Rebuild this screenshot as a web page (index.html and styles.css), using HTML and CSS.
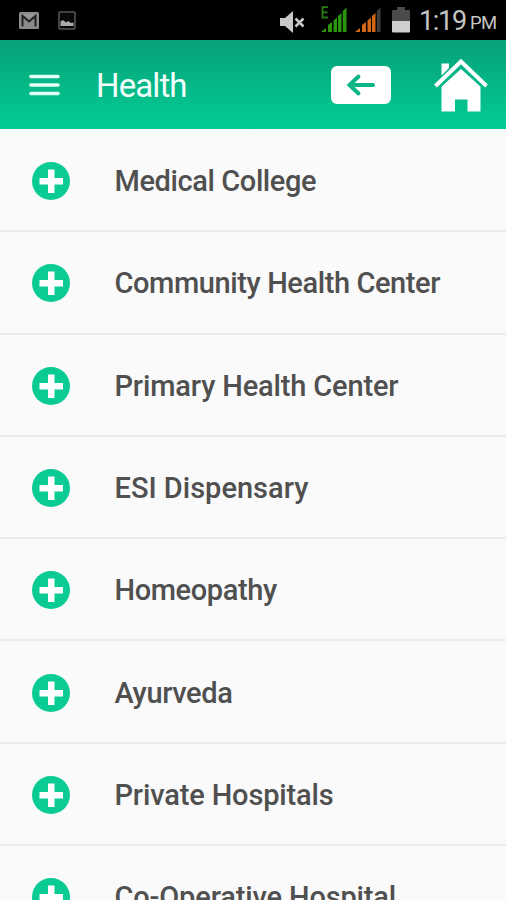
FILE: index.html
```html
<!DOCTYPE html>
<html lang="en">
    <head>
        <meta charset="UTF-8">
        <meta name="viewport" content="width=device-width, initial-scale=1.0">
        <title>Health</title>
        <link rel="stylesheet" href="styles.css">
    </head>

    <body>
        <svg class="symbols">
            <symbol id="plus" viewBox="0 0 38 38">
                <circle cx="19" cy="19" r="19" fill="#0acb94"/>
                <path d="M16 7.5h6.500v8.500h8.500v6.500h-8.500v8.500h-6.500v-8.500h-8.500v-6.500h8.500z" fill="#fff"/>
            </symbol>
        </svg>

        <div class="status">
            <svg class="mail" viewBox="0 0 20 17">
                <rect width="20" height="17" rx="1.500" fill="#8b8b8b"/>
                <path d="M3.500 14.500V4l6.500 5.500L16.500 4v10.500" fill="none" stroke="#222" stroke-width="2"/>
                <path d="M4 2h12l-6 4.500z" fill="#999"/>
            </svg>
            <svg class="photo" viewBox="0 0 18 19">
                <rect x="1" y="1" width="16" height="17" rx="1" fill="#080808" stroke="#555" stroke-width="1.600"/>
                <path d="M2.500 15v-4.500l2.500-1.500 3 2.500 2-1.500 3 2 2.500-.5V15z" fill="#aaa"/>
            </svg>
            <svg class="mute" viewBox="0 0 26 22">
                <path d="M0 7h5l8-7v22l-8-7H0z" fill="#c8c8c8"/>
                <path d="M15.500 7.500l8 8m0-8l-8 8" stroke="#c8c8c8" stroke-width="2.500"/>
            </svg>
            <svg class="signal" viewBox="0 0 28 28">
                <path d="M8 1.200H2.500v10.300H8M2.500 6.300h5" fill="none" stroke="#287c10" stroke-width="1.800"/>
                <path d="M1 26l5-4v4zM8 19l4-3v10H8zM13.500 14.500l3.500-3V26h-3.500zM18 10l3.500-3v19H18zM22.800 5l3.700-3.500V26h-3.700z" fill="#2b950d"/>
            </svg>
            <svg class="signal" viewBox="0 0 28 28">
                <path d="M1 26l5-4v4zM8 19l4-3v10H8zM13.500 14.500l3.500-3V26h-3.500zM18 10l3.500-3v19H18z" fill="#d36718"/>
                <path d="M22.800 5l3.700-3.500V26h-3.700z" fill="#3c3c3c"/>
            </svg>
            <svg class="battery" viewBox="0 0 18 26">
                <path d="M5 0h8v3h4q1 0 1 1v10H0V4q0-1 1-1h4z" fill="#4a4a4a"/>
                <path d="M0 14h18v10.500q0 1-1 1H1q-1 0-1-1z" fill="#cfcfcf"/>
            </svg>
            <span class="time">1:19</span>
            <span class="period">PM</span>
        </div>

        <div class="header">
            <svg class="menu" viewBox="0 0 32 22">
                <path d="M3 2.500h27M3 11h27M3 19.500h27" stroke="#e4fff5" stroke-width="3.600" stroke-linecap="round"/>
            </svg>
            <h1>Health</h1>
            <svg class="back" viewBox="0 0 60 38">
                <rect width="60" height="38" rx="6" fill="#fff"/>
                <path d="M42 19H19M27.500 10.500l-9 8.500 9 8.500" fill="none" stroke="#0cb586" stroke-width="4" stroke-linecap="round"/>
            </svg>
            <svg class="home" viewBox="0 0 54 54">
                <path d="M7.500 4.500H15V9l-7.500 7.500zM7.500 27.500L27 10l19.500 17.500V52.500h-13V40.500H21v12H7.500z" fill="#fff"/>
                <path d="M1.500 27L27 2.500 52.500 27" fill="none" stroke="#fff" stroke-width="4"/>
                <path d="M5.500 28.200L27 7.800l21.500 20.400" fill="none" stroke="#0ab78a" stroke-width="1.800"/>
            </svg>
        </div>

        <ul class="list">
            <li class="tight"><svg class="icon"><use href="#plus"/></svg><span>Medical College</span></li>
            <li class="tight"><svg class="icon"><use href="#plus"/></svg><span>Community Health Center</span></li>
            <li class="snug"><svg class="icon"><use href="#plus"/></svg><span>Primary Health Center</span></li>
            <li><svg class="icon"><use href="#plus"/></svg><span>ESI Dispensary</span></li>
            <li class="tight"><svg class="icon"><use href="#plus"/></svg><span>Homeopathy</span></li>
            <li class="tight"><svg class="icon"><use href="#plus"/></svg><span>Ayurveda</span></li>
            <li class="snug"><svg class="icon"><use href="#plus"/></svg><span>Private Hospitals</span></li>
            <li class="snug"><svg class="icon"><use href="#plus"/></svg><span>Co-Operative Hospital</span></li>
        </ul>
    </body>
</html>
```

FILE: styles.css
```css
* {
    box-sizing: border-box;
}
body {
    margin: 0;
    height: 900px;
    overflow: hidden;
    display: flex;
    flex-direction: column;
    font-family: Roboto, sans-serif;
    background-color: #fafafa;
}
svg {
    display: block;
    flex-shrink: 0;
}
.symbols {
    display: none;
}
.status {
    display: flex;
    align-items: flex-start;
    height: 40px;
    flex-shrink: 0;
    padding-left: 19px;
    background-color: #000;
    color: #c4c4c4;
}
.mail {
    width: 20px;
    height: 17px;
    margin-top: 12px;
}
.photo {
    width: 18px;
    height: 19px;
    margin: 11px 0 0 19px;
}
.mute {
    width: 26px;
    height: 22px;
    margin: 11px 14px 0 204px;
}
.signal {
    width: 28px;
    height: 28px;
    margin: 6px 6px 0 0;
}
.battery {
    width: 18px;
    height: 26px;
    margin: 7px 9px 0 4px;
}
.time {
    font-size: 27px;
    line-height: 42px;
    letter-spacing: -1.3px;
}
.period {
    margin-left: 4px;
    font-size: 18.5px;
    line-height: 47px;
    letter-spacing: -0.5px;
}
.header {
    display: flex;
    align-items: center;
    height: 89px;
    flex-shrink: 0;
    padding-left: 28px;
    background: linear-gradient(#08a179, #02cc95);
}
.menu {
    width: 32px;
    height: 22px;
}
h1 {
    width: 235px;
    margin: 2px 0 0 36px;
    color: #f0fffa;
    font-size: 33px;
    font-weight: 400;
    letter-spacing: -0.9px;
}
.back {
    width: 60px;
    height: 38px;
}
.home {
    width: 54px;
    height: 54px;
    margin: 2px 0 0 43px;
}
.list {
    list-style: none;
    margin: 0;
    padding: 1px 0 0;
}
li {
    display: flex;
    align-items: center;
    height: 102.3px;
    padding: 2px 0 0 32px;
    border-bottom: 2px solid #ececec;
    color: #505050;
    font-size: 29px;
    font-weight: 500;
}
.tight {
    letter-spacing: -0.4px;
}
.snug {
    letter-spacing: -0.15px;
}
.icon {
    width: 38px;
    height: 38px;
    margin-right: 44.5px;
}
```
